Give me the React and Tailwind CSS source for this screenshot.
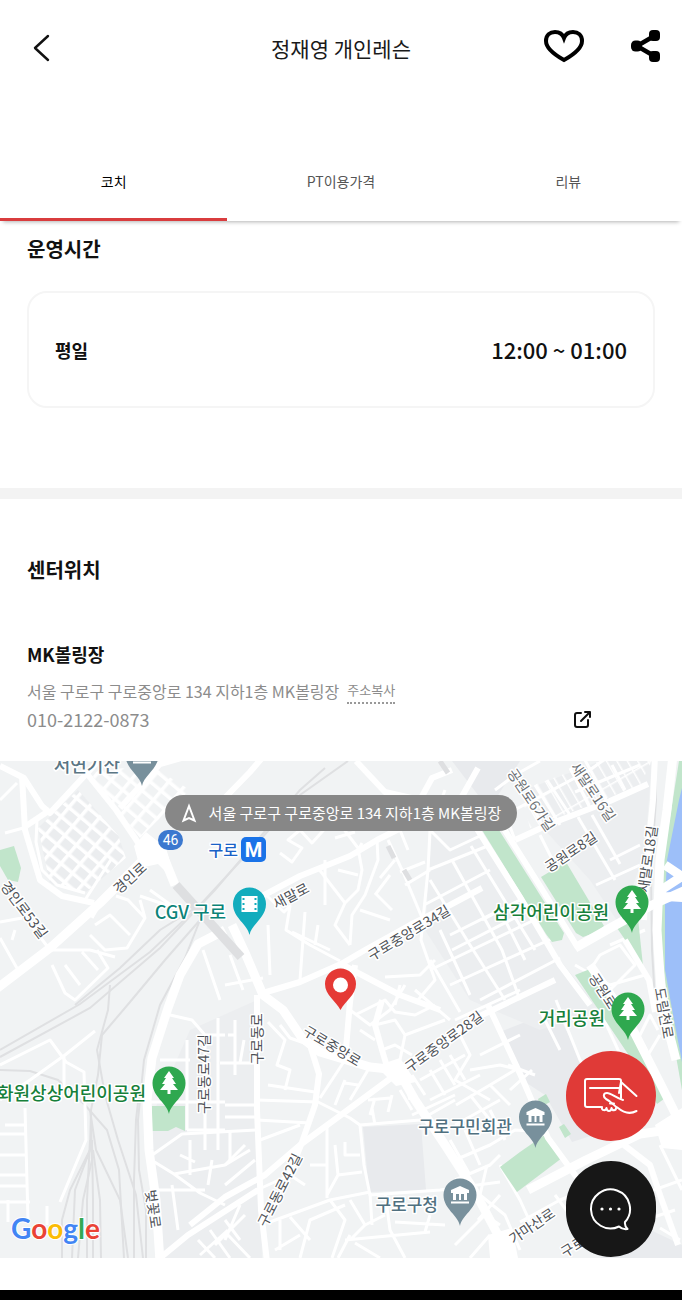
import React from 'react';

const AREAS = [
  ['#e8eaed', 'M363 1127L421 1124L426 1190L369 1192Z'],
  ['#e8eaed', 'M500 1032L556 1010L582 1062L628 1124L572 1142L545 1095L522 1080Z'],
  ['#e8eaed', 'M452 761H520L495 800L478 795Z'],
  ['#eceef0', 'M432 830L480 830L556 955L600 1010L540 1030L470 1000L425 930Z'],
  ['#eceef0', 'M525 790L600 761H652L645 850L620 925L590 880L545 830Z'],
  ['#eceef0', 'M190 1030L257 1000L262 1258H160L150 1120Z'],
  ['#e9ebee', 'M600 1258L640 1225L682 1245V1258Z'],
];

const PARKS = [
  ['#c1e5cb', 'M0 850L14 846L21 868L18 882L8 880L0 866Z'],
  ['#c1e5cb', 'M482 830H499L564 933L562 940L552 942L546 934Z'],
  ['#c1e5cb', 'M541 877L566 862L604 926L597 932L583 937L576 933Z'],
  ['#c1e5cb', 'M617 928L638 918L643 966Z'],
  ['#c1e5cb', 'M575 975L590 969L612 1000L668 1096L657 1104L632 1060Z'],
  ['#c1e5cb', 'M500 1167L520 1152L546 1134L562 1158L517 1192Z'],
  ['#c1e5cb', 'M538 1099L546 1094L550 1102L541 1107ZM559 1127L564 1124L571 1134L565 1138Z'],
  ['#c1e5cb', 'M152 1106H185V1131L176 1127L168 1131H152Z'],
  ['#c1e5cb', 'M679 761H682V1090L674 1045L661 950V880L668 830Z'],
  ['#9dbff9', 'M682 788V1062L674 1020L665 970L665 900L667 860L673 830L679 800Z'],
];

const RAILS = [
  'M0 1050L80 1004L150 952L200 905L260 840L300 795L348 761',
  'M0 1057L90 1008L160 948L215 890L300 790L325 768',
  'M75 1005L120 968L160 930L200 905',
  'M200 920L165 960L130 1002L102 1035L98 1075L91 1110L90 1150L75 1190L72 1258',
  'M200 920L185 958L160 1005L144 1060L138 1120L139 1170L146 1210L146 1258',
  'M110 985L108 1010L97 1050L105 1095L118 1140L136 1195L143 1258',
  'M0 1070L30 1071L58 1080L85 1105L107 1130L119 1170L124 1258',
  'M90 1110L96 1150L120 1200L128 1258',
  'M91 1120L92 1160L83 1200L78 1258',
  'M90 1140L87 1200V1258',
  'M92 1140L93 1200V1258',
  'M93 1150L100 1200L101 1258',
  'M90 1150L70 1190L62 1220V1258',
  'M140 1085L136 1120L134 1180L134 1258',
  'M655 761L656 800L651 870L652 950L655 1000',
];

const MAJOR_ROADS = [
  'M-5 990L50 948L100 903L145 858L160 848',
  'M160 848L175 885',
  'M232 925L246 955L263 995L283 1010L302 1038L320 1052L370 1067L398 1070',
  'M225 930L198 944L180 975L168 1008L152 1058L147 1100L149 1150L156 1200L160 1262',
  'M398 1070L415 1100L445 1145L474 1190L498 1235L500 1262',
  'M673 755L667 810L660 860L657 930L662 1005L676 1060',
  'M682 1128L640 1134L586 1160L528 1190',
  'M590 965L628 1020L660 1083L686 1135',
  'M575 948L612 927L652 905L690 888',
  'M692 870L658 892M690 898L658 896M690 882L665 865',
];

const MEDIUM_ROADS = [
  'M0 766L24 778L42 806L50 813L102 757',
  'M22 776L25 830L40 880L62 896L94 903',
  'M88 775L116 810L135 838L148 858',
  'M26 826L50 810M120 808L160 764L185 757',
  'M263 993L300 982L341 964L365 950L410 925L450 905L482 888',
  'M244 905L268 893L300 876L350 856L377 840L425 816L460 800L478 768',
  'M341 964L400 995L440 1010M355 965L350 1002L345 1060',
  'M257 995V1110L261 1210L267 1262',
  'M310 1045L319 1074L315 1105L301 1145L287 1180',
  'M190 1225L225 1197L265 1175L300 1145L345 1112L395 1075',
  'M398 1070L450 1036L482 1015L555 980',
  'M477 829L520 897L560 965L590 1005',
  'M504 829L540 886L578 948',
  'M515 840L550 824L610 801L648 784',
  'M488 1005L522 1078L548 1138L575 1175L612 1215',
  'M624 1145L650 1165L660 1195L678 1245',
  'M625 940L649 980L655 1012',
  'M356 761L385 792L420 800L432 778L452 770',
  'M160 1258L188 1235L258 1190',
  'M655 755L653 800L648 850L644 920',
  'M388 1070L382 1050L375 1025L382 1000',
  'M215 808L250 772L262 758',
];

const SMALL_ROADS = [
  'M0 800L17 783M5 833L27 827M37 820L36 842L42 870L57 885L85 893M85 900L112 858',
  'M0 922L22 918M0 938L18 970M12 940L15 930M25 917L50 950',
  'M90 935L105 950L127 948L145 918L128 900L116 896M95 925L110 915L130 935M105 895L92 918M140 900L145 918',
  'M52 965L65 993L75 1000L108 968L97 950M65 965L80 985M82 952L98 970M50 950L90 950L115 957',
  'M203 950L220 1000M225 985L263 978M140 896L175 908L150 890M230 955L243 990',
  'M0 1065L50 1040L66 1062L84 1072L86 1140L60 1202M95 1031L65 1055L30 1080L0 1100M64 1055V1090',
  'M25 1108L28 1220M0 1134H26M0 1155H26M0 1175H28M0 1186H28M8 1200V1222M0 1202H30M47 1206V1225M5 1125H25',
  'M170 1015L192 1020L205 1035V1150M187 1040V1130M150 1102H225M160 1060H190M187 1130H225M205 1035H225M218 1018V1150M220 1063H257',
  'M148 1158L182 1134L257 1130M148 1158L174 1174L225 1165L250 1150M174 1174L200 1193L225 1205M190 1140V1175M212 1160L208 1185M180 1155L195 1162M158 1190H205M172 1185L178 1230',
  'M210 1230L230 1258M198 1240L215 1258M225 1220L240 1240M200 1255L228 1230',
  'M266 895L284 912L290 906L286 930L310 945L340 961M305 912L300 980M268 925L270 975M292 932L330 950M318 925L315 945',
  'M340 824L358 848L362 870L358 890L345 903L318 868M362 843L356 855M358 875L338 870M345 903L335 925L350 945',
  'M350 945L352 915L365 895L378 860L377 840M280 853L292 862L302 848L288 840L300 830L312 843L330 823M325 860L325 905M335 838L355 832',
  'M388 840L403 872L425 925M395 860L380 878M400 872L425 862M405 885L430 870M390 875L375 895M360 910L390 920M375 893L392 910',
  'M430 830L428 870L421 940L435 980L418 1000M445 790L430 830L450 850L482 835M428 870L490 845M424 905L490 870M430 880L470 945L505 1000',
  'M452 860L502 950L520 1000M471 846L535 950M482 920L520 900M450 935L520 900M452 950L530 910M430 970L555 910M450 985L560 935M480 1000L560 958M500 910L525 960M440 930L470 995',
  'M455 1020L520 990M430 960L460 1012M415 990L450 1020M385 977L420 975L435 960M425 820L400 830L408 850',
  'M540 835L555 865M578 817L615 880M592 815L620 864M610 860L640 845M596 885L640 865',
  'M525 793L545 830M535 785L560 825M547 780L572 818M570 768L590 808M585 760L606 800M612 765L625 790M505 815L590 770L610 755M515 840L500 800M575 792L640 765M495 790L515 775L540 761',
  'M590 970L600 955L620 945L635 965L610 990M610 945L645 930M575 965L610 985L645 975',
  'M556 1000L580 1060L600 1095M595 1000L625 1065M540 1010L560 1050M635 1045L650 1015L658 1030M645 1060L660 1035',
  'M456 1105L490 1085L515 1070M470 1070L500 1065L520 1070M480 1055L520 1035M460 1035L470 1055L455 1080L490 1100M490 1085L510 1105M470 1095L490 1120M455 1125L500 1100M508 1065L535 1075M510 1090L532 1070',
  'M455 1160L490 1145L515 1130L545 1132M455 1180L490 1165L500 1155M450 1140L470 1175M465 1130L480 1165M490 1110L505 1140M487 1165L480 1195L505 1215L520 1250M545 1160L560 1152',
  'M500 1165L520 1200L530 1222M520 1222L560 1200L625 1175M500 1195L478 1220M455 1245L485 1215L500 1225M470 1258L490 1235M555 1195L570 1215M585 1170L595 1190M620 1215L650 1190',
  'M640 1195L682 1180M645 1220L675 1210M660 1145L682 1190M605 1100L625 1140M660 1228L680 1240',
  'M350 1010L370 1025L390 1010L405 985M375 1025L395 1020L405 1035L400 1060M382 1050L395 1045L412 1055M360 1030L375 1040M355 1015L385 1000L395 1012L415 1015L435 1005M405 1035L445 1020M400 985L395 1005',
  'M420 1080L465 1055M430 1100L480 1075M412 1115L455 1095M412 1075L425 1095M400 1090L412 1110M450 1055L465 1080M430 1070L445 1095M440 1060L455 1085',
  'M235 1020V1075M244 1040L240 1063M228 1035H235M268 1022L285 1040L277 1065L290 1070L285 1090M268 1085L315 1092M257 1100L318 1102L350 1118L360 1125L420 1120L455 1100M257 1120L310 1123M260 1140L300 1125M230 1130V1160M225 1105H257M225 1117H257M310 1045L290 1038L280 1025',
  'M345 1060L320 1098M345 1080L335 1105M368 1070L350 1100M358 1085L345 1083M368 1100L390 1098M370 1115L375 1098M392 1095L388 1112M405 1080L410 1100M375 1125L372 1108',
  'M327 1127V1198M360 1125L364 1165L370 1195L440 1190L500 1182M310 1165H327M335 1145L338 1175L327 1195M345 1142V1155L360 1155M338 1175L362 1172M270 1222L330 1200L370 1192M257 1190L290 1175L305 1185M225 1185L255 1160M225 1165L245 1145',
  'M290 1217L310 1240M300 1258L310 1220L345 1205M330 1200L345 1220L332 1258M350 1200L365 1225L350 1240M370 1193L372 1225M345 1240L430 1232M365 1225L385 1215M350 1235L338 1258M355 1243L380 1258M385 1193L390 1230L405 1258M395 1222L445 1225M425 1232L430 1215M280 1220V1250M300 1235L275 1250M240 1205L225 1240M228 1235L250 1258M215 1245L245 1215',
];

const RAIL_STRIPS = ['M176 885L241 957'];
const NARROW_STRIPS = ['M388 846L394 858', 'M440 761L448 773', 'M404 870L410 880'];

const STREETS = [
  ['경인로', 130, 878, -42],
  ['경인로53길', 24, 910, 53],
  ['새말로', 291, 896, -28],
  ['구로중앙로34길', 409, 933, -31],
  ['공원로6가길', 531, 800, 56, 'light'],
  ['새말로16길', 593, 792, 56, 'light'],
  ['공원로8길', 571, 852, -34],
  ['새말로18길', 648, 859, -82],
  ['공원로', 603, 991, 57],
  ['도림천로', 664, 1013, 80],
  ['구로동로', 257, 1039, -90],
  ['구로동로47길', 204, 1074, -90],
  ['구로중앙로', 332, 1046, 31],
  ['구로중앙로28길', 444, 1042, -36],
  ['구로동로42길', 280, 1190, -63],
  ['벚꽃로', 153, 1209, 82],
  ['가마산로', 532, 1226, -34],
  ['구로동로', 584, 1240, -32],
];

const PLACES = [
  ['서연기산', 120, 772, '#5b7684', 18],
  ['구로', 238, 856, '#1a62c7', 16],
  ['CGV 구로', 226, 919, '#0b8378', 18],
  ['삼각어린이공원', 609, 919, '#16803a', 18],
  ['거리공원', 605, 1025, '#16803a', 18],
  ['화원상상어린이공원', 146, 1100, '#16803a', 18],
  ['구로구민회관', 512, 1133, '#50707f', 17],
  ['구로구청', 438, 1211, '#50707f', 17],
];

const TREE = 'M0 -12L5 -5H3L7 1H4L9 7H1.5V11H-1.5V7H-9L-4 1H-7L-3 -5H-5Z';
const HALL = 'M0 -9L9 -5V-2H7V5H4V-1H1V5H-1V-1H-4V5H-7V-2H-9V-5ZM-9 6.500H9V8.500H-9Z';
const FILM = 'M-8 -8H8V8H-8ZM-7 -6V-4H-5V-6ZM-7 -1V1H-5V-1ZM-7 4V6H-5V4ZM5 -6V-4H7V-6ZM5 -1V1H7V-1ZM5 4V6H7V4Z';

const PINS = [
  [142, 755, '#78909c', HALL],
  [249.5, 904, '#12acbd', FILM],
  [632, 902, '#2fa84f', TREE],
  [628, 1009, '#2fa84f', TREE],
  [169, 1083, '#2fa84f', TREE],
  [535.5, 1117, '#78909c', HALL],
  [460, 1195, '#78909c', HALL],
];

function Roads({ paths, width }) {
  return (
    <g fill="none" stroke="#fff" strokeWidth={width} strokeLinejoin="round">
      {paths.map((d) => <path key={d} d={d} />)}
    </g>
  );
}

function Shapes({ items }) {
  return items.map(([fill, d]) => <path key={d} d={d} fill={fill} />);
}

function MapCanvas() {
  return (
    <svg
      viewBox="0 761 682 497"
      preserveAspectRatio="xMidYMid slice"
      className="block h-full w-full font-['Noto_Sans_CJK_KR',sans-serif]"
      role="img"
      aria-label="지도"
    >
      <defs>
        <pattern id="blocks" width="12" height="15" patternUnits="userSpaceOnUse" patternTransform="rotate(-50)">
          <path d="M0 0H12M0 0V15" stroke="#fff" strokeWidth="7" />
        </pattern>
        <pattern id="lots" width="9" height="24" patternUnits="userSpaceOnUse" patternTransform="rotate(-30)">
          <path d="M0 0H9M0 0V24" stroke="#fff" strokeWidth="3" />
        </pattern>
      </defs>
      <rect y="761" width="682" height="497" fill="#f1f3f4" />
      <Shapes items={AREAS} />
      <path d="M38 828L78 790L118 835L126 858L86 892L50 884Z" fill="#ebedef" />
      <path d="M38 828L78 790L118 835L126 858L86 892L50 884Z" fill="url(#blocks)" />
      <path d="M90 772L150 765L190 790L166 812L140 838L116 808Z" fill="url(#blocks)" />
      <path d="M520 790L600 761H652L640 785L530 828Z" fill="url(#lots)" />
      <g fill="none" stroke="#dfe0e2" strokeWidth="2">
        {RAILS.map((d) => <path key={d} d={d} />)}
      </g>
      <Roads paths={SMALL_ROADS} width={3} />
      <Shapes items={PARKS} />
      <Roads paths={MEDIUM_ROADS} width={6} />
      <Roads paths={MAJOR_ROADS} width={9} />
      <path d="M134 846L146 832L166 848L176 882L158 864L140 868ZM376 1066L400 1058L416 1082L396 1086ZM655 1125L682 1108V1150L662 1148ZM488 1235L512 1228L518 1258H490Z" fill="#fff" />
      <g fill="none" stroke="#dedfe1" strokeWidth="9">
        {RAIL_STRIPS.map((d) => <path key={d} d={d} />)}
      </g>
      <g fill="none" stroke="#dedfe1" strokeWidth="5">
        {NARROW_STRIPS.map((d) => <path key={d} d={d} />)}
      </g>

      <g fontSize="14" fill="#4d5156" stroke="#fff" strokeWidth="3" strokeLinejoin="round" paintOrder="stroke" textAnchor="middle">
        {STREETS.map(([name, x, y, angle, tone]) => (
          <text key={`${name}${x}`} transform={`translate(${x} ${y}) rotate(${angle})`} dy="5" fill={tone ? '#6b6f73' : undefined}>
            {name}
          </text>
        ))}
      </g>
      <g fontWeight="500" stroke="#fff" strokeWidth="3" strokeLinejoin="round" paintOrder="stroke" textAnchor="end">
        {PLACES.map(([name, x, y, color, size]) => (
          <text key={name} x={x} y={y} fill={color} fontSize={size}>{name}</text>
        ))}
      </g>

      {PINS.map(([x, y, color, glyph]) => (
        <g key={`${x}-${y}`} transform={`translate(${x} ${y})`}>
          <path d="M0 31C-2 20 -16.500 14 -16.500 0A16.500 16.500 0 0 1 16.500 0C16.500 14 2 20 0 31Z" fill={color} />
          <path d={glyph} fill="#fff" fillRule="evenodd" />
        </g>
      ))}
      <path d="M340.500 1010C336 1001 325 995 325 984A15.500 15.500 0 0 1 356 984C356 995 345 1001 340.500 1010Z" fill="#e53935" />
      <circle cx="340.500" cy="985" r="7.500" fill="#fff" />

      <rect x="158" y="830" width="25" height="20" rx="10" fill="#3b78cf" />
      <text x="170.500" y="845" fontSize="14" fill="#fff" textAnchor="middle" className="font-['Roboto',sans-serif]">46</text>
      <rect x="241" y="837" width="25" height="25" rx="5" fill="#1a73e8" />
      <text x="253.500" y="857" fontSize="20" fontWeight="700" fill="#fff" textAnchor="middle" className="font-['Roboto',sans-serif]">M</text>

      <text x="11" y="1239" fontSize="28" fontWeight="700" stroke="#fff" strokeWidth="2" paintOrder="stroke" className="font-['Lato',sans-serif]">
        <tspan fill="#4285f4">G</tspan>
        <tspan fill="#ea4335">o</tspan>
        <tspan fill="#fbbc05">o</tspan>
        <tspan fill="#4285f4">g</tspan>
        <tspan fill="#34a853">l</tspan>
        <tspan fill="#ea4335">e</tspan>
      </text>
    </svg>
  );
}

function Header() {
  return (
    <header className="grid h-[95px] grid-cols-[1fr_auto_1fr] items-center">
      <button type="button" aria-label="뒤로" className="ml-[33px] justify-self-start">
        <svg width="17" height="28" viewBox="0 0 17 28" fill="none" stroke="#111" strokeWidth="2.400" strokeLinecap="round" strokeLinejoin="round">
          <path d="M15 2L2 14L15 26" />
        </svg>
      </button>
      <h1 className="text-[21px] leading-7 text-[#1a1a1a]">정재영 개인레슨</h1>
      <div className="mr-[22px] flex items-center gap-[46px] justify-self-end pb-1">
        <button type="button" aria-label="찜하기">
          <svg width="42" height="34" viewBox="0 0 42 34" fill="none" stroke="#000" strokeWidth="4" strokeLinejoin="miter">
            <path d="M21 31C12 26 3 20 3 12C3 6 7 3 12 3C16.500 3 19.500 5 21 9C22.500 5 25.500 3 30 3C35 3 39 6 39 12C39 20 30 26 21 31Z" />
          </svg>
        </button>
        <button type="button" aria-label="공유">
          <svg width="29" height="32" viewBox="0 0 29 32">
            <path d="M24 5.500L6 16L24 26.500" fill="none" stroke="#000" strokeWidth="4.500" />
            <rect x="18" y="0" width="11" height="11" rx="4" />
            <rect x="0" y="10.500" width="11" height="11" rx="4.500" />
            <rect x="18" y="21" width="11" height="11" rx="4" />
          </svg>
        </button>
      </div>
    </header>
  );
}

function Tabs() {
  const tabs = ['코치', 'PT이용가격', '리뷰'];
  const [active, setActive] = React.useState(0);
  return (
    <nav role="tablist" className="mt-12 grid h-[78px] grid-cols-3 shadow-[0_4px_4px_-3px_rgba(0,0,0,0.3)]">
      {tabs.map((tab, i) => (
        <button
          key={tab}
          type="button"
          role="tab"
          aria-selected={i === active}
          onClick={() => setActive(i)}
          className={
            i === active
              ? 'border-b-3 border-[#d93c3e] text-sm text-black'
              : 'border-b-3 border-transparent text-sm text-[#555]'
          }
        >
          {tab}
        </button>
      ))}
    </nav>
  );
}

function MapSection() {
  return (
    <div className="relative h-[497px] overflow-hidden">
      <MapCanvas />
      <div className="absolute inset-x-0 top-[34px] flex justify-center">
        <div className="flex h-9 items-center gap-3 rounded-full bg-[#878787] px-4 text-[15px] whitespace-nowrap text-white">
          <svg width="16" height="20" viewBox="0 0 16 20" fill="none" stroke="#fff" strokeWidth="2" strokeLinejoin="miter">
            <path d="M8 3L13.500 17.500L8 15L2.500 17.500Z" />
          </svg>
          <span>서울 구로구 구로중앙로 134 지하1층 MK볼링장</span>
        </div>
      </div>
      <div className="absolute right-[26px] bottom-px flex flex-col gap-5">
        <button type="button" aria-label="결제" className="flex h-[90px] w-[90px] items-center justify-center rounded-full bg-[#e03a37]">
          <svg width="56" height="40" viewBox="0 0 56 40" fill="none" stroke="#fff" strokeWidth="2" strokeLinecap="round" strokeLinejoin="round">
            <path d="M18 31H4Q2 31 2 29V5Q2 3 4 3H36Q38 3 38 5V22" />
            <path d="M7 12H37M38 6L53.500 20" />
            <path d="M38 6L36 17" />
            <path d="M40 24C33 22 28 17 24 17C20 17 20 21 23 23C29 26 31 30 35 32C41 37 48 38 53.500 35" />
            <path d="M19 31C18 35 23 35 23.500 32C24 36 28 36 28.500 32C29 35 33 35 33 32M27 27.500H31" />
          </svg>
        </button>
        <button type="button" aria-label="채팅 문의" className="flex h-24 w-[90px] items-center justify-center rounded-[45px] bg-[#171717]">
          <svg width="44" height="44" viewBox="0 0 44 44" fill="none" stroke="#fff" strokeWidth="2" strokeLinecap="round" strokeLinejoin="round">
            <path d="M30 39.500A19.500 19.500 0 1 1 36 35C35.500 38 36.500 40 38.500 42C35 42.500 32 41.500 30 39.500" />
            <g fill="#fff" stroke="none">
              <circle cx="13" cy="22" r="1.600" />
              <circle cx="21.500" cy="22" r="1.600" />
              <circle cx="30" cy="22" r="1.600" />
            </g>
          </svg>
        </button>
      </div>
    </div>
  );
}

export default function App() {
  return (
    <div className="bg-white font-['Noto_Sans_CJK_KR',sans-serif] text-[#111]">
      <Header />
      <Tabs />
      <main>
        <section className="px-[27px] pt-[14px] pb-20">
          <h2 className="text-xl leading-7 font-bold">운영시간</h2>
          <dl className="mt-7 flex h-[117px] items-center justify-between rounded-[20px] border-2 border-[#f5f5f5] px-[26px] font-bold">
            <dt className="text-lg">평일</dt>
            <dd className="text-[22px] font-medium">12:00 ~ 01:00</dd>
          </dl>
        </section>
        <section className="border-t-11 border-[#f3f3f3]">
          <div className="px-[27px] pt-[57px] pb-7">
            <h2 className="text-xl leading-7 font-bold">센터위치</h2>
            <h3 className="mt-14 text-lg leading-7 font-bold">MK볼링장</h3>
            <p className="mt-[9px] flex items-center gap-2 text-base leading-7 text-[#8c8c8c]">
              <span>서울 구로구 구로중앙로 134 지하1층 MK볼링장</span>
              <button type="button" className="border-b-2 border-dotted border-[#999] text-[13px] leading-6">주소복사</button>
            </p>
            <div className="flex items-center justify-between pr-[63px] text-lg leading-7 text-[#8c8c8c]">
              <a href="tel:010-2122-0873">010-2122-0873</a>
              <a href="#map" aria-label="지도에서 열기">
                <svg width="19" height="19" viewBox="0 0 19 19" fill="none" stroke="#111" strokeWidth="2" strokeLinecap="round" strokeLinejoin="round">
                  <path d="M8 3H4Q2 3 2 5V15Q2 17 4 17H13Q15 17 15 15V10M12 2H17V7M17 2L8 11" />
                </svg>
              </a>
            </div>
          </div>
          <div id="map">
            <MapSection />
          </div>
        </section>
      </main>
      <footer className="mt-8 h-[10px] bg-black" />
    </div>
  );
}
